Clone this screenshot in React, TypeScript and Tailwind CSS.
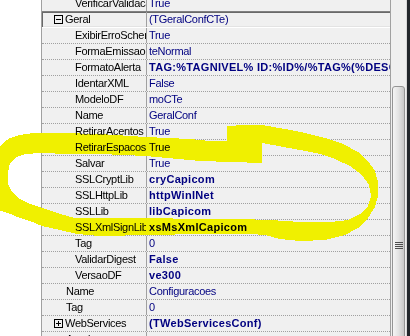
import clsx from 'clsx';

type Prop = {
  name: string;
  value: string;
  level: 1 | 2;
  bold?: boolean;
  box?: '+' | '-';
  selected?: boolean;
};

const props: Prop[] = [
  { name: 'VerificarValidacao', value: 'True', level: 2 },
  { name: 'Geral', value: '(TGeralConfCTe)', level: 1, box: '-', selected: true },
  { name: 'ExibirErroSchema', value: 'True', level: 2 },
  { name: 'FormaEmissao', value: 'teNormal', level: 2 },
  { name: 'FormatoAlerta', value: 'TAG:%TAGNIVEL% ID:%ID%/%TAG%(%DESCRICAO%) - %MSG%.', level: 2, bold: true },
  { name: 'IdentarXML', value: 'False', level: 2 },
  { name: 'ModeloDF', value: 'moCTe', level: 2 },
  { name: 'Name', value: 'GeralConf', level: 2 },
  { name: 'RetirarAcentos', value: 'True', level: 2 },
  { name: 'RetirarEspacos', value: 'True', level: 2 },
  { name: 'Salvar', value: 'True', level: 2 },
  { name: 'SSLCryptLib', value: 'cryCapicom', level: 2, bold: true },
  { name: 'SSLHttpLib', value: 'httpWinINet', level: 2, bold: true },
  { name: 'SSLLib', value: 'libCapicom', level: 2, bold: true },
  { name: 'SSLXmlSignLib', value: 'xsMsXmlCapicom', level: 2, bold: true },
  { name: 'Tag', value: '0', level: 2 },
  { name: 'ValidarDigest', value: 'False', level: 2, bold: true },
  { name: 'VersaoDF', value: 've300', level: 2, bold: true },
  { name: 'Name', value: 'Configuracoes', level: 1 },
  { name: 'Tag', value: '0', level: 1 },
  { name: 'WebServices', value: '(TWebServicesConf)', level: 1, box: '+', bold: true },
  { name: 'Arquivos', value: '', level: 1 },
];

// freehand yellow loop, outer edge then the hole
const OUTER: [number, number][] = [
  [227, 126], [245, 125], [262, 125], [285, 129], [305, 133], [325, 138], [343, 144], [358, 152],
  [368, 161], [375, 171], [378, 182], [378, 196], [375, 207], [368, 218], [358, 228], [345, 235],
  [325, 240], [300, 241], [280, 239], [265, 235], [250, 234], [200, 234], [150, 235], [100, 236],
  [77, 234], [60, 230], [42, 226], [30, 221], [20, 218], [8, 213], [-2, 210], [-2, 150], [3, 143],
  [10, 138], [20, 135], [33, 133], [60, 133], [100, 134], [146, 137], [190, 139], [210, 141], [227, 141],
];
const HOLE: [number, number][] = [
  [262, 143], [300, 150], [320, 154], [335, 159], [350, 166], [362, 175], [369, 185], [371, 196],
  [368, 206], [360, 214], [348, 220], [330, 222], [300, 222], [270, 220], [240, 219], [200, 219],
  [146, 218], [75, 218], [60, 214], [42, 208], [28, 203], [18, 198], [12, 192], [8, 184], [8, 172],
  [10, 163], [16, 157], [25, 154], [40, 153], [70, 154], [100, 154], [146, 156], [200, 161], [262, 163],
];
const toPath = (pts: [number, number][]) => 'M' + pts.map(([x, y]) => `${x} ${y}`).join(' L') + ' Z';
const MARK = `${toPath(OUTER)} ${toPath(HOLE)}`;

function Expander({ open }: { open: boolean }) {
  return (
    <span className="relative z-[2] mr-[2px] flex h-[9px] w-[9px] shrink-0 items-center justify-center border border-black">
      <span className="h-[1px] w-[5px] bg-black" />
      {!open && <span className="absolute left-[3px] top-[1px] h-[5px] w-[1px] bg-black" />}
    </span>
  );
}

function Row({ prop }: { prop: Prop }) {
  return (
    <div
      className={clsx(
        'flex h-[16px] border-b',
        prop.selected
          ? 'border-solid border-white shadow-[0_-1px_0_#808080,inset_1px_1px_0_#696969,inset_0_-1px_0_#e3e3e3]'
          : 'border-dotted border-[#a0a0a0]',
      )}
    >
      <div
        className={clsx(
          'flex w-[104px] shrink-0 items-center overflow-hidden whitespace-nowrap leading-[15px] tracking-[-0.3px] text-black',
          prop.box ? 'pl-[12px]' : prop.level === 1 ? 'pl-[24px]' : 'pl-[33px]',
        )}
      >
        {prop.box && <Expander open={prop.box === '-'} />}
        <span className="relative z-[2]">{prop.name}</span>
      </div>
      <div className="min-w-0 flex-1 overflow-hidden whitespace-nowrap border-l border-[#a0a0a0] pl-[2px] leading-[15px] text-[#000080]">
        <span className={clsx('relative z-[2]', prop.bold ? 'font-bold tracking-[0.3px]' : 'tracking-[-0.3px]')}>
          {prop.value}
        </span>
      </div>
    </div>
  );
}

export default function App() {
  return (
    <div className="relative flex h-[336px] w-[410px] overflow-hidden bg-white font-['Liberation_Sans',Arial,sans-serif] text-[11px]">
      <div className="w-[41px] shrink-0 bg-white" />

      <div className="relative w-[349px] shrink-0 overflow-hidden border-l border-[#a0a0a0] bg-[#f0f0f0]">
        <div className="-mt-[4px]">
          {props.map((p, i) => (
            <Row key={i} prop={p} />
          ))}
        </div>
      </div>

      <div className="w-[17px] shrink-0 border-l border-[#a0a0a0] border-r border-r-[#d8d8d8] bg-[#efefef]">
        <div className="mx-[1px] mt-[86px] flex h-[318px] items-center justify-center rounded-t-[3px] border border-[#959595] bg-gradient-to-r from-[#f5f5f5] via-[#e3e3e3] to-[#c8c8c8]">
          <div className="flex flex-col gap-[1px]">
            <span className="h-[1px] w-[8px] bg-[#4d4d4d]" />
            <span className="h-[1px] w-[8px] bg-[#4d4d4d]" />
            <span className="h-[1px] w-[8px] bg-[#4d4d4d]" />
            <span className="h-[1px] w-[8px] bg-[#4d4d4d]" />
          </div>
        </div>
      </div>

      <div className="w-[3px] shrink-0 bg-[#22262b]" />

      <svg className="pointer-events-none absolute left-0 top-0 z-[1]" width={410} height={336} shapeRendering="crispEdges">
        <path d={MARK} fill="#f0f000" fillRule="evenodd" />
      </svg>
      <svg className="pointer-events-none absolute left-0 top-0 z-[3] mix-blend-multiply" width={410} height={336} shapeRendering="crispEdges">
        <path d={MARK} fill="#ffff00" fillRule="evenodd" />
      </svg>
    </div>
  );
}
